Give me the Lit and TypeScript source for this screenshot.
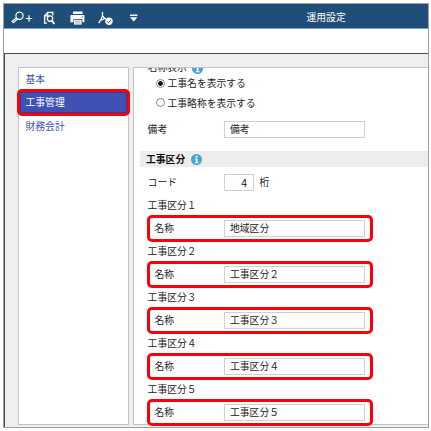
import { LitElement, html, css } from "lit";
import { customElement, property } from "lit/decorators.js";

@customElement("info-mark")
class InfoMark extends LitElement {
  static styles = css`
    :host { display: block; width: 11px; height: 11px; }
    svg { display: block; }
  `;
  render() {
    return html`<svg width="11" height="11" viewBox="0 0 11 11">
      <circle cx="5.5" cy="5.5" r="5.5" fill="#42a5d0" />
      <rect x="4.6" y="1.8" width="2" height="1.6" fill="#fff" />
      <path d="M4 4.5h2.5v3.7h1v1H3.8v-1h1V5.4H4z" fill="#fff" />
    </svg>`;
  }
}

@customElement("name-group")
class NameGroup extends LitElement {
  @property() label = "";
  @property() value = "";
  static styles = css`
    :host { display: block; }
    .label { height: 19px; line-height: 19px; padding-left: 0.6px; }
    .frame {
      box-sizing: border-box; width: 226px; height: 27px;
      border: 3px solid #fa0008; border-radius: 5px;
      display: flex; align-items: center; padding-left: 4.5px; background: #fff;
    }
    .caption { width: 69.5px; line-height: 17px; }
    .field {
      box-sizing: border-box; width: 141px; height: 17px; border: 1px solid #d0d0d0;
      line-height: 15px; padding-left: 5px; background: #fff;
    }
  `;
  render() {
    return html`<div class="label">${this.label}</div>
      <div class="frame">
        <div class="caption">名称</div>
        <div class="field">${this.value}</div>
      </div>`;
  }
}

@customElement("app-root")
class AppRoot extends LitElement {
  static styles = css`
    :host {
      display: block; box-sizing: border-box; width: 431px; height: 431px;
      padding: 3px 2px 3px 3px; background: #fff; overflow: hidden;
      font-family: "Noto Sans CJK JP", sans-serif; font-size: 9.8px; color: #1c1c1c;
      white-space: nowrap;
    }
    .window {
      box-sizing: border-box; height: 425px; border: 1px solid #a0a0a0;
      display: flex; flex-direction: column;
    }
    .bar {
      flex: none; box-sizing: border-box; height: 25px; background: #1f4e79;
      border-bottom: 1px solid #7f9fbd; display: grid; grid-template-columns: 302.5px 1fr;
    }
    .tools { display: block; }
    .title { color: #fff; line-height: 26px; }
    .strip { flex: none; height: 24px; background: #fff; }
    .body {
      flex: 1; min-height: 0; border-top: 1px solid #4c4c4c; border-left: 1px solid #4c4c4c;
      background: #efefef; display: flex; gap: 4px; padding: 13px 0 2px 13px;
    }
    .side {
      box-sizing: border-box; width: 111px; border: 1px solid #c4c4c4; background: #fff;
      display: flex; flex-direction: column; color: #3f51b5; flex: none;
    }
    .item { height: 21px; line-height: 22px; padding-left: 6.5px; }
    .selected + .item { line-height: 20px; }
    .selected {
      box-sizing: border-box; width: 113px; height: 27px; margin-left: -2px;
      border: 3px solid #fa0008; border-radius: 5px; background: #3f51b5; color: #fff;
      outline: 1px dotted #1f2f70; outline-offset: -4px; line-height: 21px; padding-left: 5.5px;
    }
    .main {
      flex: 1; min-width: 0; border: 1px solid #c4c4c4; border-right: 0; background: #fff;
      padding-left: 6px;
    }
    .clipped {
      height: 7px; overflow: hidden; display: flex; gap: 5px; padding-left: 7.6px;
      align-items: flex-start;
    }
    .clipped span { line-height: 15px; margin-top: -8px; }
    .clipped info-mark { margin-top: -5px; }
    .option {
      height: 16px; display: flex; align-items: center; gap: 3px; padding-left: 15.5px;
      margin-bottom: 3.5px;
    }
    .dot {
      box-sizing: border-box; width: 9px; height: 9px; border: 1px solid #8a8a8a;
      border-radius: 50%; background: #fff;
    }
    .on { background: radial-gradient(circle, #111 0 2px, #fff 2.7px); }
    .row { height: 17px; display: flex; align-items: center; padding-left: 7.6px; }
    .memo { margin-top: 10.5px; }
    .key { width: 76.4px; line-height: 15px; margin-top: -1px; }
    .field {
      box-sizing: border-box; width: 141px; height: 17px; border: 1px solid #d0d0d0;
      line-height: 15px; padding-left: 5px;
    }
    .short {
      width: 30px; text-align: right; padding-right: 6px; margin-right: 5.5px;
      font-size: 11px; line-height: 14px;
    }
    .unit { line-height: 15px; margin-top: -1px; }
    .section {
      height: 16px; margin: 13px 0 7px; background: #ededed; display: flex;
      align-items: center; gap: 6px; padding-left: 6px; font-weight: bold; color: #111;
    }
    .groups { padding: 5px 0 0 7px; }
  `;
  names = ["地域区分", "工事区分２", "工事区分３", "工事区分４", "工事区分５"];
  digits = ["１", "２", "３", "４", "５"];

  render() {
    return html`<div class="window">
      <div class="bar">
        <svg class="tools" width="150" height="24" viewBox="4 4 150 24" fill="none" stroke="#fff">
          <g stroke-width="1.2">
            <circle cx="19.5" cy="15.8" r="3.6" />
            <path d="M16.5 17.7l-4.3 3.7 1.1 1.2 4.5-3.8M25.8 18.5h6.4M29 15.3v6.4" />
          </g>
          <g stroke-width="1.3">
            <path d="M47 23.2h-2.4v-7.4l3.2-3.4h5v3M47.8 12.6v3.2h-3" />
            <circle cx="50" cy="18.6" r="2.7" />
            <path d="M51.8 20.6l2.6 3.3" stroke-width="1.9" />
          </g>
          <g stroke="none">
            <path d="M73 11.5h9.5v2.5H73zM71 15h13.4v7.3h-2v-3.3h-9v3.3h-3v-6.3z" fill="#fff" />
            <path d="M74 19.8h7.6v4.8H74z" fill="#fff" />
            <path d="M75 21.2h5.6M75 23h5.6" stroke="#6486a6" stroke-width=".7" />
            <circle cx="82.4" cy="16.9" r=".6" fill="#1f4e79" />
          </g>
          <path d="M102.3 11.8c.7 3.2.6 5.4-3.6 11.4M102.4 15.5c.9 2.2 2 3.3 4 3.7M99.8 20.7l4-1.7" stroke-width="1.3" />
          <circle cx="109" cy="21.3" r="3.7" fill="#fff" stroke="none" />
          <path d="M107.3 21.3l1.3 1.3 2.3-2.7" stroke="#1f4e79" stroke-width="1" />
          <path d="M130 14.6h7.4v1.4H130zM130 17.2h7.4L133.7 21.6z" fill="#fff" stroke="none" />
        </svg>
        <div class="title">運用設定</div>
      </div>
      <div class="strip"></div>
      <div class="body">
        <div class="side">
          <div class="item">基本</div>
          <div class="selected">工事管理</div>
          <div class="item">財務会計</div>
        </div>
        <div class="main">
          <div class="clipped"><span>名称表示</span><info-mark></info-mark></div>
          <div class="option"><i class="dot on"></i>工事名を表示する</div>
          <div class="option"><i class="dot"></i>工事略称を表示する</div>
          <div class="row memo"><div class="key">備考</div><div class="field">備考</div></div>
          <div class="section">工事区分<info-mark></info-mark></div>
          <div class="row">
            <div class="key">コード</div><div class="field short">4</div><div class="unit">桁</div>
          </div>
          <div class="groups">
            ${this.names.map((n, i) => html`<name-group
              .label=${"工事区分" + this.digits[i]} .value=${n}></name-group>`)}
          </div>
        </div>
      </div>
    </div>`;
  }
}
